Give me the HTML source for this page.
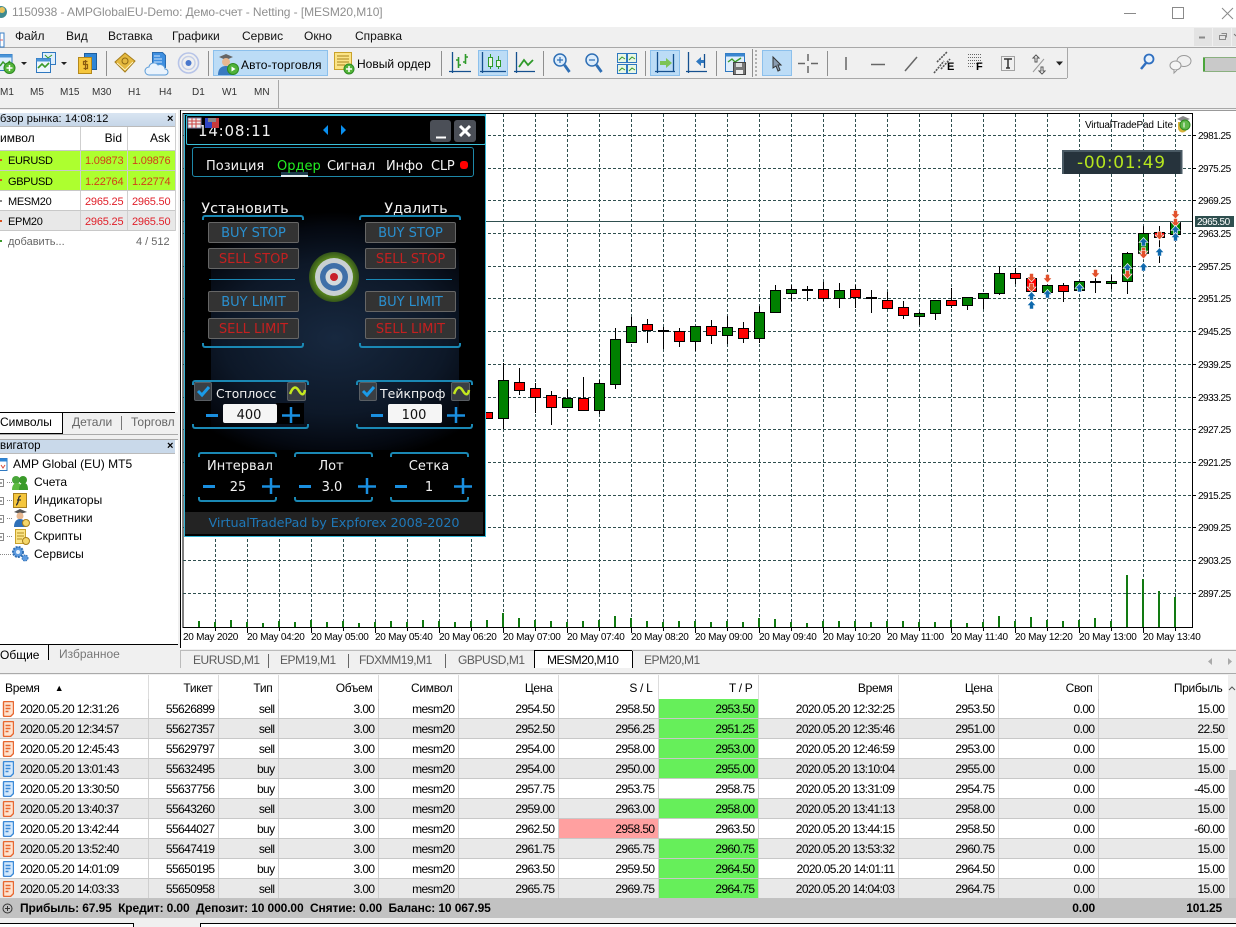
<!DOCTYPE html>
<html><head><meta charset="utf-8"><title>MT5</title>
<style>
html,body{margin:0;padding:0;background:#f0f0f0}
body{width:1236px;height:927px;position:relative;overflow:hidden;font-family:"Liberation Sans",sans-serif;font-size:12px;color:#000}
.a{position:absolute;white-space:nowrap;line-height:14px}
.b{position:absolute}
svg.f{position:absolute;left:0;top:0}
.m{color:#111;top:29px}
.tf{top:86px;font-size:10px;color:#333}
.h{color:#000;background:linear-gradient(#d9e5f2,#c6d6e8);height:13px}
.mw{font-size:11px;letter-spacing:-.2px}
.p{font-family:"DejaVu Sans",sans-serif;color:#f2f2f2;font-size:13px}
.c{transform:translateX(-50%)}
.btn{position:absolute;width:89px;height:19px;background:#333;border:1px solid #666;border-radius:2px;font-family:"DejaVu Sans",sans-serif;font-size:13px;line-height:21px;text-align:center;white-space:nowrap}
.bl{color:#2a90d0}.rd{color:#c42020}
.bt,.bb{position:absolute;height:3px;border:2px solid #1a88b4}
.bt{border-bottom:0;border-radius:3px 3px 0 0}
.bb{border-top:0;border-radius:0 0 3px 3px}
.tab{top:653px;color:#5a5a5a;font-size:12px;letter-spacing:-.45px}
table{position:absolute;left:0;top:675px;width:1228px;border-collapse:collapse;table-layout:fixed;font-size:12px;letter-spacing:-.6px;background:#fff}
th{height:23px;padding:1px 5px 0 0;font-weight:normal;text-align:right;border-right:1px solid #dcdcdc;background:#fff;font-size:12px;letter-spacing:-.3px}
td{height:19px;padding:0 3px 0 0;text-align:right;border-right:1px solid #cfcfcf;border-bottom:1px solid #c8c8c8;line-height:14px;white-space:nowrap}
tr.g td{background:#e9e9e9}
td.t{background:#66ef5a!important}
td.s{background:#ffa0a0!important}
td.l,th.l{text-align:left;padding-left:20px;position:relative}
th.l{padding-left:5px}
td svg{position:absolute;left:2px;top:2px}
.ax{font-size:10px;letter-spacing:-.5px}
.tm{font-size:10px;letter-spacing:-.25px}
</style></head>
<body>

<!-- title bar -->
<div class="b" style="left:0;top:0;width:1236px;height:27px;background:#fff"></div>
<div class="a" style="left:12px;top:5px;color:#8f8f8f;font-size:12px;letter-spacing:-.08px">1150938 - AMPGlobalEU-Demo: Демо-счет - Netting - [MESM20,M10]</div>
<svg class="f" width="1236" height="110" style="z-index:1">
<!-- window icon -->
<circle cx="1" cy="12" r="6" fill="#3f8a8f"/><circle cx="2" cy="10" r="3" fill="#e8c25a"/>
<path d="M1124 13.500h12" stroke="#8a8a8a"/><path d="M1172.500 7.500h11v11h-11z" fill="none" stroke="#8a8a8a"/><path d="M1222 8l11 11M1233 8l-11 11" stroke="#8a8a8a"/>
<!-- mdi -->
<rect x="1194" y="28" width="18" height="18" fill="#e3e3e3"/><rect x="1213" y="28" width="18" height="18" fill="#e3e3e3"/><rect x="1232" y="28" width="4" height="18" fill="#e3e3e3"/>
<path d="M1199 38.500h6" stroke="#8a8a8a" stroke-width="2" transform="translate(0,-1)"/><path d="M1219.500 38.500h6v4h-6zM1221.500 36.500h5v4" fill="none" stroke="#8a8a8a" transform="translate(0,-3)"/>
<path d="M1234 34l2 2" stroke="#777"/>
<!-- rows -->
<path d="M0 47.500H1236" stroke="#a8a8a8"/><path d="M0 78.500H1067" stroke="#a8a8a8"/><path d="M0 108.500H1236" stroke="#a8a8a8"/>
<path d="M1067.500 48v30M278.500 80v28" stroke="#a8a8a8"/>
<!-- menu icon -->
<path d="M0 33h4v14H0z" fill="#fff" stroke="#3a7fc8"/><path d="M0 40h3" stroke="#d66"/>
<!-- separators -->
<path d="M106.500 51v25M208.500 51v25M441.500 51v25M543.500 51v25M645.500 51v25M716.500 51v25M752.500 49v28M827.500 51v25" stroke="#8f8f8f"/>
<path d="M756 50v26" stroke="#b0b0b0" stroke-width="2" stroke-dasharray="2 2"/>
<!-- highlights -->
<g fill="#bcdcf6" stroke="#8cc0ec"><rect x="213.500" y="50.500" width="114" height="25"/><rect x="478.500" y="50.500" width="29" height="25"/><rect x="650.500" y="50.500" width="29" height="25"/><rect x="762.500" y="50.500" width="29" height="25"/></g>
<!-- new chart -->
<path d="M-3 54.500h15v16h-15z" fill="#dfeefb" stroke="#2f78c0"/><path d="M-3 54.500h15v3h-15z" fill="#4a94d8"/><path d="M0 66l3-4 3 3 4-4" fill="none" stroke="#3a9a2a" stroke-width="1.5"/>
<circle cx="9.500" cy="68" r="5.500" fill="#55b53a" stroke="#2d8a22"/><path d="M9.500 65v6M6.500 68h6" stroke="#fff" stroke-width="1.500"/>
<path d="M21 62h6l-3 3z M61 62h6l-3 3z M1056 61.500h7l-3.500 4z" fill="#222"/>
<!-- profiles -->
<path d="M42.500 52.500h13v12h-13z" fill="#dfeefb" stroke="#2f78c0"/><path d="M36.500 58.500h14v14h-14z" fill="#eef6fd" stroke="#2f78c0"/><path d="M36.500 58.500h14v3h-14z" fill="#4a94d8"/><path d="M38 68l4-4 3 3 4-4" fill="none" stroke="#3a9a2a" stroke-width="1.6"/><path d="M45 55l3 3 4-3" fill="none" stroke="#3a9a2a"/>
<!-- dollar -->
<path d="M84.500 53.500h12v16h-12z" fill="#2f86d6" stroke="#1d5e9e"/><path d="M78.500 57.500h13v16h-13z" fill="#f5c63c" stroke="#b5891b"/><path d="M87.500 61.500h-4v3h4v4h-4M85.500 60v10" fill="none" stroke="#8a5a10" stroke-width="1.200"/>
<!-- book -->
<path d="M115 62l10-9 10 8-10 11z" fill="#e5b93f" stroke="#a57d1c"/><path d="M117 63l8 7 8-8" fill="none" stroke="#fff3c0"/><circle cx="125" cy="61" r="3" fill="none" stroke="#8f6a14"/>
<!-- cloud -->
<path d="M152.500 52.500h10l3 3v12h-13z" fill="#3f8fe0" stroke="#2a6cb0"/><path d="M154 56h6M154 59h8M154 62h8" stroke="#cfe6fb"/><path d="M149 75a4 4 0 0 1 0-8a5 5 0 0 1 9-2a5 5 0 0 1 7 4a3 3 0 0 1 0 6z" fill="#eaf3fc" stroke="#5a9bd8"/>
<!-- rings -->
<g fill="none" stroke="#b7c4e8"><circle cx="188.500" cy="63" r="10" stroke-width="1.600"/><circle cx="188.500" cy="63" r="6.500" stroke-width="1.500" stroke="#c5cfe8"/></g><circle cx="188.500" cy="63" r="3" fill="#4a78cc"/>
<!-- auto trading -->
<path d="M219 57l7-3 7 3-7 3z" fill="#666"/><circle cx="226" cy="62" r="4" fill="#e8b890"/><path d="M218 75c0-7 4-9 8-9s8 2 8 9z" fill="#3a7ac0"/><circle cx="233" cy="69" r="5.500" fill="#4fb238" stroke="#2d8a22"/><path d="M231.500 66.500l4 2.500-4 2.500z" fill="#fff"/>
<!-- new order -->
<path d="M334.500 52.500h17v17h-17z" fill="#fbe487" stroke="#c9a22b"/><path d="M337 56h12M337 59h12M337 62h12M337 65h8" stroke="#a8831d"/><circle cx="349" cy="69" r="5" fill="#55b53a" stroke="#2d8a22"/><path d="M349 66v6M346 69h6" stroke="#fff" stroke-width="1.500"/>
<!-- bars chart -->
<g fill="none" stroke="#15508f" stroke-width="1.300"><path d="M452.500 52v21M449 71.500h22"/><path d="M482.500 52v21M480 71.500h26"/><path d="M516.500 52v21M514 71.500h21"/></g>
<g stroke="#2f9a2a" stroke-width="1.600" fill="none"><path d="M458.500 57v11M456 60h3M458 65h3M465.500 54v10M463 62h3M465 57h3"/></g>
<g stroke="#2f9a2a" fill="#eaf6e4"><path d="M490.500 54v15M498.500 56v13" fill="none"/><rect x="488.500" y="57.500" width="4" height="9"/><rect x="496.500" y="60.500" width="4" height="6"/></g>
<path d="M519 67l5-7 4 5 5-5" fill="none" stroke="#2f9a2a" stroke-width="1.800"/>
<!-- zoom -->
<g fill="#dcecfb" stroke="#2f6fb5" stroke-width="1.500"><circle cx="560" cy="60" r="6"/><circle cx="592" cy="60" r="6"/></g>
<path d="M564.500 65l5 7M596.500 65l5 7" stroke="#2f6fb5" stroke-width="2.800"/><path d="M557 60h6M560 57v6M589 60h6" stroke="#2f6fb5" stroke-width="1.200"/>
<!-- tile -->
<g fill="#e9f6e5" stroke="#2f78c0"><rect x="617.500" y="53.500" width="9" height="9"/><rect x="627.500" y="53.500" width="9" height="9"/><rect x="617.500" y="64.500" width="9" height="9"/><rect x="627.500" y="64.500" width="9" height="9"/></g>
<path d="M619 60l3-3 3 2M629 60l3-3 3 2M619 71l3-3 3 2M629 71l3-3 3 2" fill="none" stroke="#3a9a2a"/>
<!-- autoscroll / shift -->
<g fill="none" stroke="#15508f" stroke-width="1.300"><path d="M657.500 52v21M655 71.500h20M673.500 54v17M688.500 52v21M686 71.500h21M704.500 54v14"/></g>
<path d="M660 61h6v-3l6 5-6 5v-3h-6z" fill="#7cc454"/><path d="M701 60v-3l-5 4.500 5 4.500v-3h3v-3z" fill="#2f78c0"/>
<!-- template -->
<rect x="725.500" y="53.500" width="19" height="18" fill="#dfeefb" stroke="#2f78c0"/><path d="M725.500 53.500h19v3h-19z" fill="#3a86d0"/><path d="M728 62l4-3 3 3 6-4" fill="none" stroke="#3a9a2a" stroke-width="1.400"/><rect x="733.500" y="62.500" width="12" height="12" fill="#777" stroke="#444"/><rect x="736" y="63" width="6" height="4" fill="#ddd"/><rect x="736" y="70" width="7" height="4" fill="#eee"/>
<!-- cursor -->
<path d="M773 57l0 11 3-2 2 5 2-1-2-5 3 0z" fill="#8a9cb0" stroke="#333"/>
<!-- cross -->
<path d="M808 54v7M808 66v7M798 63.500h7M811 63.500h7" stroke="#666" stroke-width="1.500"/>
<path d="M846 57v13M871 64.500h14" stroke="#666" stroke-width="1.500"/><path d="M905 71l12-14" stroke="#666" stroke-width="1.500"/>
<!-- E -->
<path d="M934 73l10-12M937 62l10-10M941 69l9-10" stroke="#555" stroke-dasharray="2 1" stroke-width="1.600"/>
<!-- F dots -->
<path d="M968 54.500h14M968 57.500h14M968 60.500h14M968 63.500h14M968 66.500h6" stroke="#666" stroke-dasharray="1 1"/>
<!-- T box -->
<rect x="1001.500" y="56.500" width="13" height="14" fill="none" stroke="#555" stroke-dasharray="1 1"/><path d="M1004 59h8M1008 59v9M1006 68h4" stroke="#333" stroke-width="1.500" fill="none"/>
<!-- arrows -->
<path d="M1036 55l-3 3h2v4h2v-4h2z M1042 74l-3-3h2v-4h2v4h2z" fill="#fff" stroke="#555"/><path d="M1033 72l11-13" stroke="#999"/>
<!-- search -->
<circle cx="1149" cy="59" r="4.500" fill="#e8f2fc" stroke="#2f6fc0" stroke-width="1.800"/><path d="M1146 63l-5 6" stroke="#2f6fc0" stroke-width="2.500"/>
<!-- chat -->
<ellipse cx="1184" cy="61" rx="7" ry="5.500" fill="#f0f0f0" stroke="#999"/><ellipse cx="1175.500" cy="65.500" rx="5.500" ry="4.500" fill="#f5f5f5" stroke="#999"/><path d="M1174 70v3l3-3" fill="#f5f5f5" stroke="#999"/>
<!-- gauge -->
<rect x="1203" y="57" width="33" height="15" fill="#c9c9c9"/><rect x="1203" y="57" width="2" height="15" fill="#4aa63a"/><path d="M1203 57.500h33M1203 71.500h33" stroke="#8ab07f"/>
</svg>
<div class="a" style="left:947px;top:60px;font-weight:bold;font-size:11px;z-index:2">E</div>
<div class="a" style="left:976px;top:60px;font-weight:bold;font-size:11px;z-index:2">F</div>

<div class="a m" style="left:15px">Файл</div><div class="a m" style="left:66px">Вид</div><div class="a m" style="left:108px">Вставка</div><div class="a m" style="left:172px">Графики</div><div class="a m" style="left:242px">Сервис</div><div class="a m" style="left:304px">Окно</div><div class="a m" style="left:355px">Справка</div>
<div class="a" style="left:241px;top:58px;z-index:2;letter-spacing:.1px">Авто-торговля</div>
<div class="a" style="left:357px;top:57px;z-index:2">Новый ордер</div>
<div class="a tf" style="left:0">M1</div><div class="a tf" style="left:30px">M5</div><div class="a tf" style="left:60px">M15</div><div class="a tf" style="left:92px">M30</div><div class="a tf" style="left:128px">H1</div><div class="a tf" style="left:159px">H4</div><div class="a tf" style="left:192px">D1</div><div class="a tf" style="left:222px">W1</div><div class="a tf" style="left:254px">MN</div>

<!-- Market watch -->
<div class="b" style="left:0;top:110px;width:178px;height:535px;background:#fff"></div>
<div class="b h" style="left:0;top:113px;width:175px"></div>
<div class="a" style="left:0;top:112px;font-size:11px;letter-spacing:.1px">бзор рынка: 14:08:12</div>
<div class="a" style="left:167px;top:112px;font-weight:bold;font-size:11px">×</div>
<div class="b" style="left:0;top:151px;width:175px;height:39px;background:#adff2f"></div>
<div class="b" style="left:0;top:210px;width:175px;height:20px;background:#e8e8e8"></div>
<svg class="f" width="180" height="660">
<path d="M80.500 127v103M127.500 127v103M175.500 113v118" stroke="#cfcfcf"/>
<path d="M0 150.500h175M0 170.500h175M0 190.500h175M0 210.500h175M0 230.500h175" stroke="#c8c8c8"/>
<path d="M0 126.500h175" stroke="#bbb"/>
<g fill="#d9501e"><rect x="0" y="159" width="2" height="2"/><rect x="0" y="179" width="2" height="2"/><rect x="0" y="220" width="2" height="2"/></g><rect x="0" y="200" width="2" height="2" fill="#888"/><rect x="0" y="240" width="2" height="2" fill="#3a9a2a"/>
<!-- tabs market -->
<rect x="0" y="412" width="178" height="22" fill="#f0f0f0"/>
<path d="M0 412.500H62.500V433.500H0" fill="#fff" stroke="#000"/><path d="M62 412.500H175" stroke="#000"/><path d="M121.500 416v14" stroke="#777"/><path d="M0 434.500h178" stroke="#aaa"/>
<rect x="0" y="435" width="178" height="5" fill="#f0f0f0"/>
<path d="M0 439.500h178" stroke="#aaa"/>
<rect x="0" y="440" width="175" height="13" fill="#c9d9ea"/>
<path d="M0 453.500h175" stroke="#bbb"/>
<!-- tree -->
<path d="M7 482.500h5M7 500.500h5M7 518.500h5M7 536.500h5M0 554.500h12" stroke="#888" stroke-dasharray="1 1"/>
<g fill="#fff" stroke="#888"><rect x="-3.500" y="479.500" width="7" height="7"/><rect x="-3.500" y="497.500" width="7" height="7"/><rect x="-3.500" y="515.500" width="7" height="7"/><rect x="-3.500" y="533.500" width="7" height="7"/></g>
<path d="M0 483h2M0 501h2M0 519h2M0 537h2" stroke="#444"/>
<!-- amp -->
<path d="M-1 458.500h8v12h-8z" fill="#fff" stroke="#2f78c0"/><path d="M-1 458.500h8v3h-8z" fill="#2f86d6"/><path d="M1 465l2 3 2-3" fill="none" stroke="#d64a3a"/>
<!-- accounts -->
<circle cx="16" cy="480" r="4" fill="#4aa63a"/><circle cx="23" cy="480" r="4" fill="#3a9a2a"/><path d="M12 490c0-6 3-7 5-7s5 1 5 7z" fill="#5ebb42"/><path d="M19 490c0-6 3-7 5-7s4 1 4 7z" fill="#3a9a2a"/>
<!-- indicators -->
<rect x="13.500" y="493.500" width="13" height="14" fill="#f5c63c" stroke="#a87f1c"/><path d="M21 496c-3 0-2 3-3 6s-2 3-2 3M17 500h4" fill="none" stroke="#333" stroke-width="1.300"/>
<!-- advisors -->
<path d="M14 512l6-3 7 3-7 2z" fill="#555"/><circle cx="20" cy="516" r="3.500" fill="#e8b890"/><path d="M14 527c0-6 3-8 6-8s6 2 6 8z" fill="#2f70b8"/><circle cx="26" cy="523" r="3.500" fill="#f5d76a" stroke="#a87f1c"/>
<!-- scripts -->
<path d="M15.500 529.500h10v14h-10z" fill="#fbe487" stroke="#c9a22b"/><path d="M17 533h7M17 536h7M17 539h5" stroke="#b38e22"/><circle cx="26" cy="541" r="3.500" fill="#f5d76a" stroke="#a87f1c"/>
<!-- services -->
<circle cx="18" cy="552" r="5" fill="#5d9be0" stroke="#2f6fb5" stroke-width="2" stroke-dasharray="2 1"/><circle cx="18" cy="552" r="2" fill="#e8f2fc"/><circle cx="25" cy="558" r="3" fill="#5d9be0" stroke="#2f6fb5" stroke-dasharray="1.500 1"/>
<!-- bottom tabs -->
<rect x="0" y="645" width="178" height="21" fill="#f0f0f0"/>
<path d="M0 644.500H178" stroke="#000"/><path d="M0 665.500H48.500V644.500" fill="#fff" stroke="#000"/><rect x="0" y="645" width="48" height="20" fill="#f7f7f7"/>
</svg>
<div class="a" style="left:0;top:131px;font-size:12px">имвол</div>
<div class="a" style="right:1114px;top:131px;font-size:12px">Bid</div>
<div class="a" style="left:150px;top:131px;font-size:12px">Ask</div>
<div class="a mw" style="left:8px;top:154px;font-size:11px;letter-spacing:-.3px">EURUSD</div><div class="a mw" style="left:85px;top:154px;color:#d0401a">1.09873</div><div class="a mw" style="left:132px;top:154px;color:#d0401a">1.09876</div>
<div class="a mw" style="left:8px;top:175px;font-size:11px;letter-spacing:-.3px">GBPUSD</div><div class="a mw" style="left:85px;top:175px;color:#d0401a">1.22764</div><div class="a mw" style="left:132px;top:175px;color:#d0401a">1.22774</div>
<div class="a mw" style="left:8px;top:195px;font-size:11px;letter-spacing:-.3px">MESM20</div><div class="a mw" style="left:85px;top:195px;color:#e0202a">2965.25</div><div class="a mw" style="left:132px;top:195px;color:#e0202a">2965.50</div>
<div class="a mw" style="left:8px;top:215px;font-size:11px;letter-spacing:-.3px">EPM20</div><div class="a mw" style="left:85px;top:215px;color:#e0202a">2965.25</div><div class="a mw" style="left:132px;top:215px;color:#e0202a">2965.50</div>
<div class="a" style="left:8px;top:235px;font-size:11px;color:#666">добавить...</div>
<div class="a" style="left:136px;top:235px;font-size:11px;color:#666">4 / 512</div>
<div class="a" style="left:0;top:415px;font-size:12px">Символы</div>
<div class="a" style="left:72px;top:415px;font-size:12px;color:#666">Детали</div>
<div class="b" style="left:131px;top:415px;width:44px;height:14px;overflow:hidden"><div class="a" style="left:0;top:0;color:#666">Торговля</div></div>
<div class="a" style="left:0;top:439px;font-size:11.5px">вигатор</div>
<div class="a" style="left:167px;top:439px;font-weight:bold;font-size:11px">×</div>
<div class="a" style="left:13px;top:457px">AMP Global (EU) MT5</div>
<div class="a" style="left:34px;top:475px">Счета</div><div class="a" style="left:34px;top:493px">Индикаторы</div><div class="a" style="left:34px;top:511px">Советники</div><div class="a" style="left:34px;top:529px">Скрипты</div><div class="a" style="left:34px;top:547px">Сервисы</div>
<div class="a" style="left:0;top:648px;z-index:2">Общие</div>
<div class="a" style="left:59px;top:647px;color:#777;z-index:2">Избранное</div>

<!-- Chart -->
<div class="b" style="left:180px;top:110px;width:1056px;height:538px;background:#fff;border-top:1px solid #999"></div>
<svg class="f" width="1236" height="660" style="font-family:'Liberation Sans',sans-serif">
<defs>
<path id="dn" d="M-2-4.500H2V-1H4.500L0 4-4.500-1H-2z" fill="#e2512c"/>
<path id="up" d="M0-4.500L4.500 .5H2V4H-2V.5H-4.500z" fill="#0f69ad"/>
</defs>
<path d="M180.500 110v538" stroke="#000"/>
<path d="M183 113.500H1192.500V627.500H183z" fill="none" stroke="#000"/>
<!-- grid -->
<path fill="none" stroke="#2f4f4f" stroke-dasharray="3 2" d="M183 135.500H1192M183 168.500H1192M183 200.500H1192M183 233.500H1192M183 266.500H1192M183 298.500H1192M183 331.500H1192M183 364.500H1192M183 397.500H1192M183 429.500H1192M183 462.500H1192M183 495.500H1192M183 527.500H1192M183 560.500H1192M183 593.500H1192"/>
<path fill="none" stroke="#2f4f4f" stroke-dasharray="3 2" d="M215.500 114V627M247.500 114V627M279.500 114V627M311.500 114V627M343.500 114V627M375.500 114V627M407.500 114V627M439.500 114V627M471.500 114V627M503.500 114V627M535.500 114V627M567.500 114V627M599.500 114V627M631.500 114V627M663.500 114V627M695.500 114V627M727.500 114V627M759.500 114V627M791.500 114V627M823.500 114V627M855.500 114V627M887.500 114V627M919.500 114V627M951.500 114V627M983.500 114V627M1015.500 114V627M1047.500 114V627M1079.500 114V627M1111.500 114V627M1143.500 114V627M1175.500 114V627"/>
<path d="M183 221.500H1192" stroke="#2f4f4f"/>
<!-- axis ticks -->
<path stroke="#000" fill="none" d="M1192 135.500h4M1192 168.500h4M1192 200.500h4M1192 233.500h4M1192 266.500h4M1192 298.500h4M1192 331.500h4M1192 364.500h4M1192 397.500h4M1192 429.500h4M1192 462.500h4M1192 495.500h4M1192 527.500h4M1192 560.500h4M1192 593.500h4"/>
<path stroke="#000" fill="none" d="M215.500 627v4M247.500 627v6M279.500 627v4M311.500 627v6M343.500 627v4M375.500 627v6M407.500 627v4M439.500 627v6M471.500 627v4M503.500 627v6M535.500 627v4M567.500 627v6M599.500 627v4M631.500 627v6M663.500 627v4M695.500 627v6M727.500 627v4M759.500 627v6M791.500 627v4M823.500 627v6M855.500 627v4M887.500 627v6M919.500 627v4M951.500 627v6M983.500 627v4M1015.500 627v6M1047.500 627v4M1079.500 627v6M1111.500 627v4M1143.500 627v6M1175.500 627v4"/>
<!-- volumes -->
<path stroke="#127a12" stroke-width="2" fill="none" d="M199 627v-6M215 627v-5M231 627v-7M247 627v-5M263 627v-4M279 627v-6M295 627v-5M311 627v-7M327 627v-5M343 627v-6M359 627v-4M375 627v-5M391 627v-6M407 627v-5M423 627v-7M439 627v-6M455 627v-5M471 627v-6M487 627v-7M503 627v-14M519 627v-9M535 627v-7M551 627v-6M567 627v-5M583 627v-6M599 627v-7M615 627v-11M631 627v-9M647 627v-6M663 627v-5M679 627v-6M695 627v-6M711 627v-5M727 627v-6M743 627v-5M759 627v-9M775 627v-8M791 627v-5M807 627v-4M823 627v-6M839 627v-6M855 627v-6M871 627v-5M887 627v-6M903 627v-6M919 627v-5M935 627v-5M951 627v-7M967 627v-4M983 627v-5M999 627v-11M1015 627v-6M1031 627v-10M1047 627v-7M1063 627v-6M1079 627v-7M1095 627v-9M1111 627v-6M1127 627v-52M1143 627v-48M1159 627v-36M1175 627v-30"/>
<!-- wicks -->
<path stroke="#000" fill="none" d="M503.500 363v66M519.500 368v27M535.500 383v30M551.500 391v34M567.500 389v18M583.500 377v33M599.500 380v34M615.500 328v61M631.500 317v25M647.500 319v24M663.500 327v22M679.500 328v19M695.500 326v25M711.500 320v24M727.500 316v28M743.500 322v21M759.500 306v37M775.500 285v27M791.500 285v16M807.500 286v15M823.500 282v19M839.500 283v25M855.500 285v23M871.500 290v23M887.500 292v16M903.500 301v18M919.500 312v13M935.500 300v20M951.500 288v20M967.500 297v13M983.500 293v16M999.500 266v29M1015.500 268v16M1031.500 275v25M1047.500 285v12M1063.500 283v19M1079.500 281v11M1095.500 275v18M1111.500 275v14M1127.500 252v42M1143.500 226v32M1159.500 226v37M1175.500 217v25"/>
<!-- green bodies -->
<path fill="#008000" stroke="#000" d="M498.500 380.500h10v38h-10zM562.500 398.500h10v9h-10zM594.500 383.500h10v27h-10zM610.500 339.500h10v45h-10zM626.500 326.500h10v16h-10zM690.500 326.500h10v15h-10zM722.500 327.500h10v8h-10zM754.500 312.500h10v26h-10zM770.500 290.500h10v22h-10zM786.500 289.500h10v4h-10zM834.500 290.500h10v8h-10zM914.500 313.500h10v3h-10zM930.500 300.500h10v13h-10zM962.500 297.500h10v8h-10zM978.500 293.500h10v5h-10zM994.500 273.500h10v20h-10zM1042.500 285.500h10v7h-10zM1074.500 281.500h10v9h-10zM1106.500 281.500h10v2h-10zM1122.500 253.500h10v28h-10zM1138.500 233.500h10v20h-10zM1170.500 222.500h10v12h-10z"/>
<!-- red bodies -->
<path fill="#f00" stroke="#000" d="M482.500 412.500h10v6h-10zM514.500 382.500h10v8h-10zM530.500 388.500h10v9h-10zM546.500 395.500h10v12h-10zM578.500 398.500h10v12h-10zM642.500 324.500h10v6h-10zM674.500 331.500h10v10h-10zM706.500 326.500h10v9h-10zM738.500 328.500h10v10h-10zM818.500 289.500h10v9h-10zM850.500 289.500h10v8h-10zM882.500 300.500h10v8h-10zM898.500 307.500h10v8h-10zM946.500 300.500h10v5h-10zM1010.500 273.500h10v5h-10zM1026.500 278.500h10v13h-10zM1058.500 285.500h10v6h-10zM1154.500 232.500h10v5h-10z"/>
<!-- doji -->
<path stroke="#000" stroke-width="2" d="M658 331h11M802 290h11M866 298h11M1090 282h11"/>
<!-- arrows with halo -->
<g stroke="#fff" stroke-width=".6">
<use href="#dn" x="1031.500" y="278"/><use href="#dn" x="1031.500" y="288"/><use href="#up" x="1031.500" y="296"/><use href="#up" x="1031.500" y="305"/>
<use href="#dn" x="1047.500" y="279"/><use href="#up" x="1047.500" y="294"/>
<use href="#up" x="1079.500" y="288"/><use href="#dn" x="1095.500" y="274"/>
<use href="#up" x="1127.500" y="268"/><use href="#dn" x="1127.500" y="275"/>
<use href="#up" x="1143.500" y="242"/><use href="#dn" x="1143.500" y="252"/><use href="#dn" x="1143.500" y="255"/><use href="#up" x="1143.500" y="267"/>
<use href="#dn" x="1159.500" y="236"/><use href="#up" x="1159.500" y="252"/>
<use href="#dn" x="1175.500" y="215"/><use href="#dn" x="1175.500" y="223"/><use href="#up" x="1175.500" y="230"/><use href="#up" x="1175.500" y="237"/>
</g>
<!-- price labels -->
<g class="ax" fill="#000">
<text x="1198" y="139">2981.25</text><text x="1198" y="172">2975.25</text><text x="1198" y="204">2969.25</text><text x="1198" y="237">2963.25</text><text x="1198" y="270">2957.25</text><text x="1198" y="302">2951.25</text><text x="1198" y="335">2945.25</text><text x="1198" y="368">2939.25</text><text x="1198" y="401">2933.25</text><text x="1198" y="433">2927.25</text><text x="1198" y="466">2921.25</text><text x="1198" y="499">2915.25</text><text x="1198" y="531">2909.25</text><text x="1198" y="564">2903.25</text><text x="1198" y="597">2897.25</text>
</g>
<rect x="1195" y="216" width="39" height="11" fill="#2f4f4f"/>
<text class="ax" x="1197" y="225" fill="#fff">2965.50</text>
<g class="tm" fill="#000">
<text x="183" y="640">20 May 2020</text><text x="247" y="640">20 May 04:20</text><text x="311" y="640">20 May 05:00</text><text x="375" y="640">20 May 05:40</text><text x="439" y="640">20 May 06:20</text><text x="503" y="640">20 May 07:00</text><text x="567" y="640">20 May 07:40</text><text x="631" y="640">20 May 08:20</text><text x="695" y="640">20 May 09:00</text><text x="759" y="640">20 May 09:40</text><text x="823" y="640">20 May 10:20</text><text x="887" y="640">20 May 11:00</text><text x="951" y="640">20 May 11:40</text><text x="1015" y="640">20 May 12:20</text><text x="1079" y="640">20 May 13:00</text><text x="1143" y="640">20 May 13:40</text>
</g>
<text x="1085" y="128" font-size="10" letter-spacing="-.2">VirtualTradePad</text><text x="1157" y="128" font-size="10">Lite</text>
<path d="M1177 119l6-3 7 3-7 3z" fill="#888"/><path d="M1178 122h9v6a4 4 0 0 1-9 0z" fill="#d8b23a"/><circle cx="1185" cy="125" r="5" fill="#5fb84a" stroke="#2d8a22"/><path d="M1184 122.500v5" stroke="#fff"/>
<!-- timer -->
<rect x="1062" y="150" width="120" height="24" fill="#26333c"/><path d="M1062 151h120M1063 150v24M1181.500 150v24" stroke="#4a5a64" stroke-width="2"/>
<text x="1077" y="168" font-family="'DejaVu Sans',sans-serif" font-size="17" fill="#b6e61e" letter-spacing=".7">-00:01:49</text>
</svg>

<!-- chart tabs -->
<svg class="f" width="1236" height="680">
<rect x="180" y="649" width="1056" height="19" fill="#f0f0f0"/>
<path d="M180.500 668V650.500H534.500V667.500" fill="none" stroke="#bbb"/>
<path d="M534.500 668V650.500H632.500V668" fill="#fff" stroke="#000"/>
<path d="M632 650.500H1236" stroke="#aaa"/>
<path d="M268.500 654v14M348.500 654v14M445.500 654v14" stroke="#666"/>
<path d="M1212 658l-4 3.500 4 3.500zM1228 658l4 3.500-4 3.500z" fill="#aaa"/>
<rect x="0" y="668" width="1236" height="7" fill="#f0f0f0"/>
<path d="M0 673.500H1236" stroke="#aaa"/>
</svg>
<div class="a tab" style="left:193px">EURUSD,M1</div>
<div class="a tab" style="left:280px">EPM19,M1</div>
<div class="a tab" style="left:359px">FDXMM19,M1</div>
<div class="a tab" style="left:458px">GBPUSD,M1</div>
<div class="a tab" style="left:547px;color:#000">MESM20,M10</div>
<div class="a tab" style="left:644px">EPM20,M1</div>

<!-- VTP panel -->
<div class="b" style="left:184px;top:114px;width:300px;height:421px;background:#000;border:1px solid #36b4d4;overflow:hidden">
  <div class="b" style="left:26px;top:55px;width:248px;height:280px;background:radial-gradient(ellipse 75% 45% at 50% 60%,#17283f 0%,#0d1828 60%,#040810 88%,#000 100%)"></div>
</div>
<div class="b" style="left:186px;top:115px;width:298px;height:28px;border:1px solid #3cc0d8;border-radius:2px"></div>
<div class="b" style="left:192px;top:147px;width:280px;height:28px;border:1px solid #1e88a8;border-radius:3px"></div>
<div class="b" style="left:430px;top:120px;width:21px;height:22px;background:#4b4f57;border-radius:3px"></div>
<div class="b" style="left:454px;top:120px;width:22px;height:22px;background:#4b4f57;border-radius:3px"></div>
<div class="b" style="left:281px;top:172px;width:27px;height:5px;background:linear-gradient(#1b3a4a,#1b3a4a 60%,#e4eef2 60%)"></div>
<div class="b" style="left:460px;top:161px;width:8px;height:8px;background:#f00;border-radius:3px"></div>

<div class="bt" style="left:202px;top:215px;width:98px"></div>
<div class="bt" style="left:359px;top:215px;width:98px"></div>
<div class="bb" style="left:202px;top:343px;width:98px"></div>
<div class="bb" style="left:359px;top:343px;width:98px"></div>
<div class="b" style="left:209px;top:279px;width:86px;height:1px;background:#1a88b4"></div>
<div class="b" style="left:366px;top:279px;width:86px;height:1px;background:#1a88b4"></div>

<div class="btn bl" style="left:208px;top:222px">BUY STOP</div>
<div class="btn rd" style="left:208px;top:248px">SELL STOP</div>
<div class="btn bl" style="left:208px;top:291px">BUY LIMIT</div>
<div class="btn rd" style="left:208px;top:318px">SELL LIMIT</div>
<div class="btn bl" style="left:365px;top:222px">BUY STOP</div>
<div class="btn rd" style="left:365px;top:248px">SELL STOP</div>
<div class="btn bl" style="left:365px;top:291px">BUY LIMIT</div>
<div class="btn rd" style="left:365px;top:318px">SELL LIMIT</div>

<div class="bt" style="left:192px;top:380px;width:113px"></div>
<div class="bb" style="left:192px;top:424px;width:113px"></div>
<div class="bt" style="left:356px;top:380px;width:113px"></div>
<div class="bb" style="left:356px;top:424px;width:113px"></div>
<div class="bt" style="left:198px;top:452px;width:75px"></div>
<div class="bb" style="left:198px;top:497px;width:75px"></div>
<div class="bt" style="left:294px;top:452px;width:75px"></div>
<div class="bb" style="left:294px;top:497px;width:75px"></div>
<div class="bt" style="left:390px;top:452px;width:75px"></div>
<div class="bb" style="left:390px;top:497px;width:75px"></div>

<div class="b" style="left:276px;top:403px;width:28px;height:21px;background:#000"></div>
<div class="b" style="left:223px;top:404px;width:54px;height:19px;background:#f5f5f5;border-radius:2px"></div>
<div class="b" style="left:388px;top:404px;width:54px;height:19px;background:#f5f5f5;border-radius:2px"></div>
<div class="b" style="left:194px;top:382px;width:16px;height:17px;background:#3a3f44;border:1px solid #5a5f64;border-radius:2px"></div>
<div class="b" style="left:287px;top:382px;width:17px;height:17px;background:#3a3f44;border:1px solid #5a5f64;border-radius:2px"></div>
<div class="b" style="left:359px;top:382px;width:16px;height:17px;background:#3a3f44;border:1px solid #5a5f64;border-radius:2px"></div>
<div class="b" style="left:451px;top:382px;width:17px;height:17px;background:#3a3f44;border:1px solid #5a5f64;border-radius:2px"></div>
<div class="b" style="left:185px;top:512px;width:298px;height:22px;background:#232323"></div>

<svg class="f" width="1236" height="560">
<!-- nav arrows -->
<path d="M328 125v10l-5-5zM341 125v10l5-5z" fill="#0a90f0"/>
<!-- min / close -->
<path d="M436 137.500h10" stroke="#fff" stroke-width="2"/>
<path d="M460 126l10 10M470 126l-10 10" stroke="#fff" stroke-width="3"/>
<!-- target -->
<defs><radialGradient id="tg"><stop offset=".7" stop-color="#5f8f1f"/><stop offset="1" stop-color="#35561a"/></radialGradient></defs>
<circle cx="334" cy="277" r="25" fill="url(#tg)"/><circle cx="334" cy="277" r="19" fill="#c9d0d2"/><circle cx="334" cy="277" r="14" fill="#3f6fa8"/><circle cx="334" cy="277" r="8.500" fill="#d5dadc"/><circle cx="334" cy="277" r="4" fill="#c8202a"/>
<!-- checks -->
<path d="M198 391l4 4 7-8M363 391l4 4 7-8" fill="none" stroke="#1a9be8" stroke-width="3"/>
<path d="M290 394c3-8 6-8 9-3s5 4 6-1M454 394c3-8 6-8 9-3s5 4 6-1" fill="none" stroke="#c4e81e" stroke-width="2.500"/>
<!-- plus minus -->
<g stroke="#1a8fe0" fill="none">
<path stroke-width="3" d="M206 415.500h12M371 415.500h12M203 486.500h12M299 486.500h12M395 486.500h12"/>
<path stroke-width="2.500" d="M282 415.500h18M291 407v16M447 415.500h18M456 407v16M262 486.500h18M271 478v16M358 486.500h18M367 478v16M454 486.500h18M463 478v16"/>
</g>
</svg>

<div class="a p" style="left:198px;top:124px;font-size:15px;letter-spacing:.8px">14:08:11</div>
<svg class="f" width="230" height="135"><rect x="188" y="118" width="13" height="10" fill="#eee" stroke="#8a8ab0"/><path d="M188 121h13M188 124h13M192 118v10M196 118v10" stroke="#c44"/><rect x="205" y="118" width="14" height="10" fill="#3044c4"/><path d="M212 118h7v10h-7z" fill="#c83a3a"/><path d="M208 118h8v4h-8z" fill="#888"/></svg>
<div class="a p" style="left:206px;top:160px">Позиция</div>
<div class="a p" style="left:277px;top:160px;color:#22ee22">Ордер</div>
<div class="a p" style="left:327px;top:160px;letter-spacing:-.2px">Сигнал</div>
<div class="a p" style="left:386px;top:160px;letter-spacing:-.1px">Инфо</div>
<div class="a p" style="left:431px;top:160px;letter-spacing:-.2px">CLP</div>
<div class="a p c" style="left:245px;top:202px;font-size:14.5px">Установить</div>
<div class="a p c" style="left:416px;top:202px;font-size:14.5px">Удалить</div>
<div class="a p" style="left:216px;top:387px;font-size:12.3px">Стоплосс</div>
<div class="a p" style="left:380px;top:387px;font-size:12.5px">Тейкпроф</div>
<div class="a p c" style="left:249px;top:409px;color:#111">400</div>
<div class="a p c" style="left:414px;top:409px;color:#111">100</div>
<div class="a p c" style="left:240px;top:460px">Интервал</div>
<div class="a p c" style="left:331px;top:460px">Лот</div>
<div class="a p c" style="left:429px;top:460px">Сетка</div>
<div class="a p c" style="left:238px;top:481px">25</div>
<div class="a p c" style="left:332px;top:481px">3.0</div>
<div class="a p c" style="left:429px;top:481px">1</div>
<div class="a p c" style="left:334px;top:517px;font-size:12.8px;color:#1f78b8;letter-spacing:-.08px">VirtualTradePad by Expforex 2008-2020</div>

<!-- Table -->
<svg width="0" height="0" style="position:absolute"><defs>
<symbol id="d" viewBox="0 0 12 16"><path d="M1.500 1.500q0-1 1-1h8q1 0 1 1v11l-3 3h-6q-1 0-1-1z" stroke="currentColor" stroke-width="1.400"/><path d="M3.500 4.500h5M3.500 7.500h5M3.500 10.500h3" stroke="currentColor" stroke-width="1.400"/></symbol>
</defs></svg>
<table>
<colgroup><col style="width:148px"><col style="width:70px"><col style="width:60px"><col style="width:100px"><col style="width:80px"><col style="width:100px"><col style="width:100px"><col style="width:100px"><col style="width:140px"><col style="width:100px"><col style="width:100px"><col style="width:130px"></colgroup>
<tr><th class="l">Время &nbsp;&nbsp;&nbsp;&nbsp;<span style="font-size:9px;vertical-align:1px">▲</span></th><th>Тикет</th><th>Тип</th><th>Объем</th><th>Символ</th><th>Цена</th><th>S / L</th><th>T / P</th><th>Время</th><th>Цена</th><th>Своп</th><th>Прибыль</th></tr>
<tr><td class="l"><svg width="12" height="16" style="color:#e8672f;fill:#fde3d0"><use href="#d"/></svg>2020.05.20 12:31:26</td><td>55626899</td><td>sell</td><td>3.00</td><td>mesm20</td><td>2954.50</td><td>2958.50</td><td class="t">2953.50</td><td>2020.05.20 12:32:25</td><td>2953.50</td><td>0.00</td><td>15.00</td></tr>
<tr class="g"><td class="l"><svg width="12" height="16" style="color:#e8672f;fill:#fde3d0"><use href="#d"/></svg>2020.05.20 12:34:57</td><td>55627357</td><td>sell</td><td>3.00</td><td>mesm20</td><td>2952.50</td><td>2956.25</td><td class="t">2951.25</td><td>2020.05.20 12:35:46</td><td>2951.00</td><td>0.00</td><td>22.50</td></tr>
<tr><td class="l"><svg width="12" height="16" style="color:#e8672f;fill:#fde3d0"><use href="#d"/></svg>2020.05.20 12:45:43</td><td>55629797</td><td>sell</td><td>3.00</td><td>mesm20</td><td>2954.00</td><td>2958.00</td><td class="t">2953.00</td><td>2020.05.20 12:46:59</td><td>2953.00</td><td>0.00</td><td>15.00</td></tr>
<tr class="g"><td class="l"><svg width="12" height="16" style="color:#3a8ad8;fill:#d5e8fa"><use href="#d"/></svg>2020.05.20 13:01:43</td><td>55632495</td><td>buy</td><td>3.00</td><td>mesm20</td><td>2954.00</td><td>2950.00</td><td class="t">2955.00</td><td>2020.05.20 13:10:04</td><td>2955.00</td><td>0.00</td><td>15.00</td></tr>
<tr><td class="l"><svg width="12" height="16" style="color:#3a8ad8;fill:#d5e8fa"><use href="#d"/></svg>2020.05.20 13:30:50</td><td>55637756</td><td>buy</td><td>3.00</td><td>mesm20</td><td>2957.75</td><td>2953.75</td><td>2958.75</td><td>2020.05.20 13:31:09</td><td>2954.75</td><td>0.00</td><td>-45.00</td></tr>
<tr class="g"><td class="l"><svg width="12" height="16" style="color:#e8672f;fill:#fde3d0"><use href="#d"/></svg>2020.05.20 13:40:37</td><td>55643260</td><td>sell</td><td>3.00</td><td>mesm20</td><td>2959.00</td><td>2963.00</td><td class="t">2958.00</td><td>2020.05.20 13:41:13</td><td>2958.00</td><td>0.00</td><td>15.00</td></tr>
<tr><td class="l"><svg width="12" height="16" style="color:#3a8ad8;fill:#d5e8fa"><use href="#d"/></svg>2020.05.20 13:42:44</td><td>55644027</td><td>buy</td><td>3.00</td><td>mesm20</td><td>2962.50</td><td class="s">2958.50</td><td>2963.50</td><td>2020.05.20 13:44:15</td><td>2958.50</td><td>0.00</td><td>-60.00</td></tr>
<tr class="g"><td class="l"><svg width="12" height="16" style="color:#e8672f;fill:#fde3d0"><use href="#d"/></svg>2020.05.20 13:52:40</td><td>55647419</td><td>sell</td><td>3.00</td><td>mesm20</td><td>2961.75</td><td>2965.75</td><td class="t">2960.75</td><td>2020.05.20 13:53:32</td><td>2960.75</td><td>0.00</td><td>15.00</td></tr>
<tr><td class="l"><svg width="12" height="16" style="color:#3a8ad8;fill:#d5e8fa"><use href="#d"/></svg>2020.05.20 14:01:09</td><td>55650195</td><td>buy</td><td>3.00</td><td>mesm20</td><td>2963.50</td><td>2959.50</td><td class="t">2964.50</td><td>2020.05.20 14:01:11</td><td>2964.50</td><td>0.00</td><td>15.00</td></tr>
<tr class="g"><td class="l"><svg width="12" height="16" style="color:#e8672f;fill:#fde3d0"><use href="#d"/></svg>2020.05.20 14:03:33</td><td>55650958</td><td>sell</td><td>3.00</td><td>mesm20</td><td>2965.75</td><td>2969.75</td><td class="t">2964.75</td><td>2020.05.20 14:04:03</td><td>2964.75</td><td>0.00</td><td>15.00</td></tr>
</table>

<!-- scrollbar -->
<div class="b" style="left:1228px;top:675px;width:8px;height:223px;background:#f0f0f0"></div>
<div class="b" style="left:1229px;top:770px;width:7px;height:128px;background:#cdcdcd"></div>
<svg class="f" width="1236" height="700"><path d="M1229 690l3-3 3 3" fill="none" stroke="#555"/></svg>

<!-- footer -->
<div class="b" style="left:0;top:898px;width:1236px;height:20px;background:#c2c2c2"></div>
<svg class="f" width="20" height="927"><circle cx="7.500" cy="908.500" r="4.500" fill="none" stroke="#333"/><path d="M5 908.500h5M7.500 906v5" stroke="#333"/></svg>
<div class="a" style="left:20px;top:901px;font-weight:bold;font-size:12px;letter-spacing:-.12px">Прибыль: 67.95&nbsp; Кредит: 0.00&nbsp; Депозит: 10 000.00&nbsp; Снятие: 0.00&nbsp; Баланс: 10 067.95</div>
<div class="a" style="right:141px;top:901px;font-weight:bold;font-size:12px;letter-spacing:-.15px">0.00</div>
<div class="a" style="right:14px;top:901px;font-weight:bold;font-size:12px;letter-spacing:-.15px">101.25</div>
<div class="b" style="left:0;top:923px;width:134px;height:4px;background:#fff;border-top:1px solid #000;border-right:1px solid #000;box-sizing:border-box"></div>
<div class="b" style="left:200px;top:923px;width:1036px;height:4px;background:#fff;border-top:1px solid #000;border-left:1px solid #000;box-sizing:border-box"></div>
</body></html>
